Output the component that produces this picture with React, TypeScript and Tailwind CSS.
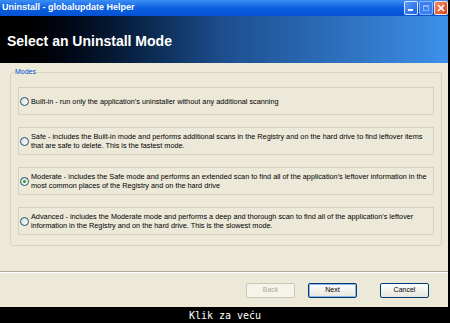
import { type ReactNode } from 'react';

type Mode = {
  id: string;
  lines: string[];
  checked?: boolean;
};

const MODES: Mode[] = [
  { id: 'builtin', lines: ["Built-in - run only the application's uninstaller without any additional scanning"] },
  {
    id: 'safe',
    lines: [
      'Safe - includes the Built-in mode and performs additional scans in the Registry and on the hard drive to find leftover items',
      'that are safe to delete. This is the fastest mode.',
    ],
  },
  {
    id: 'moderate',
    checked: true,
    lines: [
      "Moderate - includes the Safe mode and performs an extended scan to find all of the application's leftover information in the",
      'most common places of the Registry and on the hard drive',
    ],
  },
  {
    id: 'advanced',
    lines: [
      "Advanced - includes the Moderate mode and performs a deep and thorough scan to find all of the application's leftover",
      'information in the Registry and on the hard drive. This is the slowest mode.',
    ],
  },
];

function Radio({ checked }: { checked?: boolean }) {
  return (
    <div className="flex h-[9px] w-[9px] shrink-0 items-center justify-center rounded-full border border-[#1c5180] bg-gradient-to-br from-[#dcdcd4] to-white">
      {checked && <div className="h-[3px] w-[3px] rounded-full bg-[#21a121]" />}
    </div>
  );
}

function XpButton({ children, variant }: { children: ReactNode; variant?: 'default' | 'disabled' }) {
  const base = 'flex h-[15px] w-[49px] items-center justify-center rounded-[2px] border text-[7px]';
  if (variant === 'disabled') {
    return <div className={`${base} border-[#c9c7ba] bg-[#f5f4ea] text-[#aca899]`}>{children}</div>;
  }
  if (variant === 'default') {
    return (
      <div className={`${base} border-[#003c74] bg-gradient-to-b from-white to-[#e6e5dd] text-black shadow-[inset_0_0_0_1px_#8fb2e8]`}>
        {children}
      </div>
    );
  }
  return <div className={`${base} border-[#003c74] bg-gradient-to-b from-white to-[#e6e5dd] text-black`}>{children}</div>;
}

export default function App() {
  return (
    <div className="flex h-[323px] w-[450px] flex-col bg-black font-['Liberation_Sans',Arial,sans-serif]">
      <div className="flex h-[307px] w-[448px] flex-col">
        {/* title bar */}
        <div className="flex h-[16px] items-center justify-between bg-gradient-to-b from-[#3d8ff5] via-[#0a5fe0] to-[#0551d1] pl-[2px]">
          <span className="text-[9px] font-bold text-white">Uninstall - globalupdate Helper</span>
          <div className="flex h-[14px] gap-[1px]">
            <div className="relative h-[14px] w-[14px] rounded-[2px] border border-white/80 bg-gradient-to-br from-[#5a9bf7] to-[#1e5fe6]">
              <div className="absolute bottom-[3px] left-[3px] h-[2px] w-[5px] bg-white" />
            </div>
            <div className="relative h-[14px] w-[14px] rounded-[2px] border border-white/40 bg-[#3a7ef0]">
              <div className="absolute left-[3px] top-[3px] h-[6px] w-[6px] border border-[#8ab4f8] border-t-2" />
            </div>
            <div className="flex h-[14px] w-[14px] items-center justify-center rounded-[2px] border border-white/80 bg-gradient-to-br from-[#ee8a63] to-[#d8431b]">
              <svg width="8" height="8" viewBox="0 0 8 8">
                <path d="M1 1L7 7M7 1L1 7" stroke="white" strokeWidth="1.6" />
              </svg>
            </div>
          </div>
        </div>

        {/* header */}
        <div className="flex h-[47px] items-center bg-gradient-to-r from-black via-[#1d4f8f] to-[#3d90ea] pl-[7px] pt-[3px]">
          <h1 className="text-[14px] font-bold text-white">Select an Uninstall Mode</h1>
        </div>

        {/* content */}
        <div className="flex flex-1 flex-col bg-[#ece9d8]">
          <div className="relative ml-[10px] mt-[9px] h-[174px] w-[432px] rounded-[3px] border border-[#d6d3c3] px-[7px] pt-[14px]">
            <span className="absolute left-[3px] top-[-5px] bg-[#ece9d8] px-[1px] text-[7px] leading-[8px] text-[#0046d5]">Modes</span>
            <div className="flex flex-col gap-[12px]">
              {MODES.map((m) => (
                <div key={m.id} className="flex h-[28px] items-center gap-[2px] border border-[#d5d2c2] pl-[1px]">
                  <Radio checked={m.checked} />
                  <div className="whitespace-nowrap text-[7.3px] leading-[9px] text-black">
                    {m.lines.map((l, i) => (
                      <div key={i}>{l}</div>
                    ))}
                  </div>
                </div>
              ))}
            </div>
          </div>

          <div className="mt-[25px] border-t border-b border-t-[#aca899] border-b-white" />
          <div className="mt-[10px] flex gap-[13px] pl-[246px]">
            <XpButton variant="disabled">Back</XpButton>
            <XpButton variant="default">Next</XpButton>
            <div className="ml-[10px]">
              <XpButton>Cancel</XpButton>
            </div>
          </div>
        </div>
      </div>
      <div className="flex flex-1 items-center justify-center font-['DejaVu_Sans_Mono',monospace] text-[10px] text-white">
        Klik za veću
      </div>
    </div>
  );
}
